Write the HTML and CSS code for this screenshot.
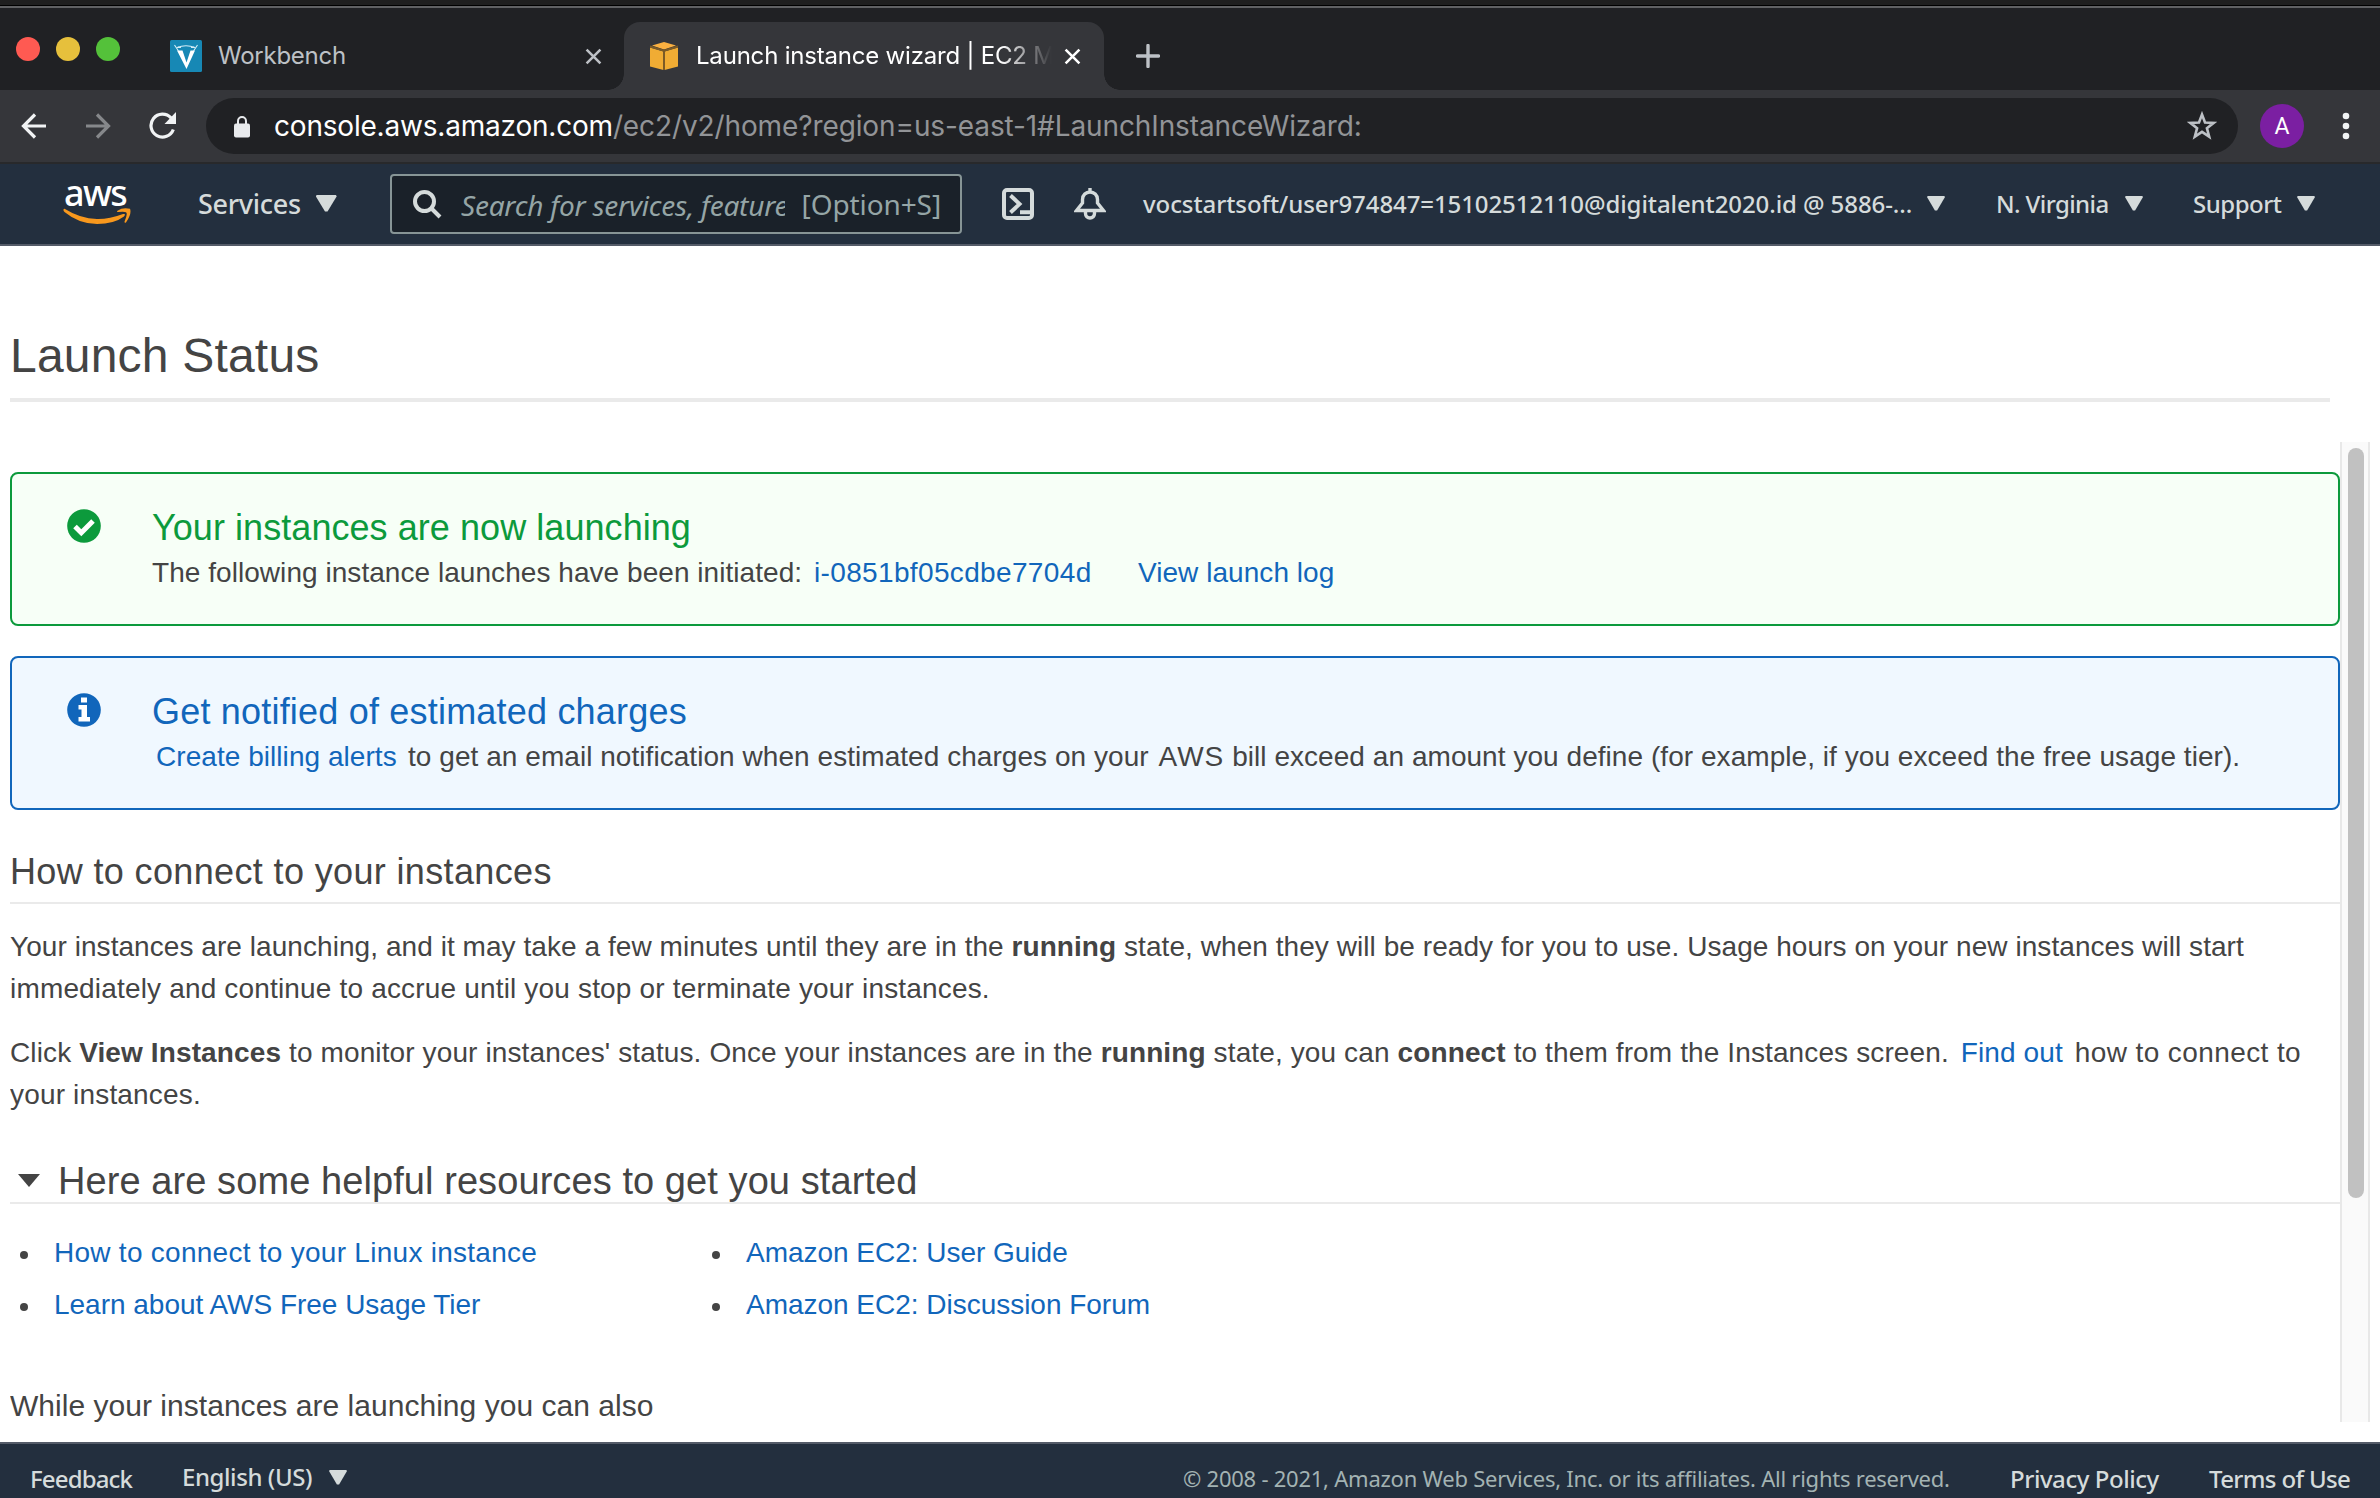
FILE: index.html
```html
<!DOCTYPE html>
<html lang="en">
<head>
<meta charset="utf-8">
<title>Launch instance wizard | EC2 Management Console</title>
<link rel="stylesheet" href="styles.css">
</head>
<body>
<div class="desktop-edge"></div>
<div class="tab-strip">
  <div class="lights"><i class="light red"></i><i class="light yellow"></i><i class="light green"></i></div>
  <div class="tab tab-idle">
    <svg class="fav-v" viewBox="0 0 32 32"><rect width="32" height="32" rx="1.5" fill="#1788b5"/><path d="M7 10.500h5.500l4 12 4-12h4.500l-8.500 18.500z" fill="#fff"/><path d="M4.500 5l4 6M27.500 5l-4 6M7 7.500Q16 4 25 7.500M11 7.500l-3-.8M21 7.500l3-.8" fill="none" stroke="#d5edf6" stroke-width="1.100"/></svg>
    <span class="tab-title">Workbench</span>
    <svg class="close" viewBox="0 0 16 16"><path d="M1.500 1.500l13 13M14.500 1.500l-13 13"/></svg>
  </div>
  <div class="tab tab-active">
    <svg class="fav-cube" viewBox="0 0 28 28"><path d="M0 5.500l13.500 4V28L0 24.500z" fill="#f0ac34"/><path d="M28 5.500l-13.500 4V28L28 24.500z" fill="#f0ac34"/><path d="M2 3.500L14 0l12 3.500L14 7.500z" fill="#fbb040"/><path d="M0 4.500l14 4.300 14-4.300M14 8v20" fill="none" stroke="#7b5a26" stroke-width="2"/></svg>
    <span class="tab-title">Launch instance wizard | EC2 M</span>
    <svg class="close" viewBox="0 0 16 16"><path d="M1.500 1.500l13 13M14.500 1.500l-13 13"/></svg>
  </div>
  <svg class="plus" viewBox="0 0 24 24"><path d="M12 1.500v21M1.500 12h21"/></svg>
</div>
<div class="toolbar">
  <svg class="nav back" viewBox="0 0 26 26"><path d="M25 13H3M14 1.500L2.500 13 14 24.500"/></svg>
  <svg class="nav forward" viewBox="0 0 26 26"><path d="M1 13h22M12 1.500L23.500 13 12 24.500"/></svg>
  <svg class="nav reload" viewBox="0 0 28 28"><path d="M24.300 17.500A11.500 11.500 0 1 1 22 5.800"/><path d="M27 0v12H15.500z" class="solid"/></svg>
  <div class="omnibox">
    <svg class="lock" viewBox="0 0 16 22"><rect y="7.500" width="16" height="14" rx="2" fill="#e8eaed"/><path d="M4 8V5a4 4 0 0 1 8 0v3" fill="none" stroke="#e8eaed" stroke-width="2"/></svg>
    <span class="url"><span class="host">console.aws.amazon.com</span>/ec2/v2/home?region=us-east-1#LaunchInstanceWizard:</span>
    <svg class="star" viewBox="0 0 30 30"><path d="M15 3.500l3 8 8.700.4-6.800 5.300 2.300 8.500-7.200-4.800-7.200 4.800 2.300-8.500-6.800-5.300 8.700-.4z"/></svg>
  </div>
  <div class="avatar">A</div>
  <svg class="dots" viewBox="0 0 8 34"><circle cx="4" cy="7" r="3.300"/><circle cx="4" cy="17" r="3.300"/><circle cx="4" cy="27" r="3.300"/></svg>
</div>
<header class="aws-nav">
  <div class="logo"><span class="logo-text">aws</span>
    <svg class="smile" viewBox="0 0 68 17"><path d="M1 .8Q-.3 2 1.500 4 16 16 34 16 51 16 61 8.500 63.500 5.500 60 6 46 11.300 34 11 17 10.500 2 1 1.300.5 1 .8z" fill="#f8981d"/><path d="M54.500 2.700Q60-1 67 .8 69 6 63 14.500 61 15.500 61.700 13 65 5.500 63 4.200 61 3.300 55.500 4 53 4 54.500 2.700z" fill="#f8981d"/></svg>
  </div>
  <div class="menu services"><span>Services</span><i class="caret big"></i></div>
  <div class="search">
    <svg class="glass" viewBox="0 0 29 29"><circle cx="11.500" cy="11.500" r="9.500"/><path d="M18.500 18.500l8.500 8.500"/></svg>
    <span class="placeholder">Search for services, feature</span>
    <span class="shortcut">[Option+S]</span>
  </div>
  <svg class="shell" viewBox="0 0 32 32"><rect x="2" y="2" width="28" height="28" rx="3"/><path d="M8.500 7.500l9 8.500-9 8.500M18 24.200h10"/></svg>
  <svg class="bell" viewBox="0 0 32 32"><path d="M16 0v4M2.500 22.500h27L23.500 15v-3.500C23.500 7 20 4 16 4S8.500 7 8.500 11.500V15zM11.500 23v2.500a4.500 4.500 0 0 0 9 0V23"/></svg>
  <div class="menu user"><span>vocstartsoft/user974847=15102512110@digitalent2020.id @ 5886-...</span><i class="caret"></i></div>
  <div class="menu region"><span>N. Virginia</span><i class="caret"></i></div>
  <div class="menu support"><span>Support</span><i class="caret"></i></div>
</header>
<main class="page">
  <h1>Launch Status</h1>
  <div class="scroller">
    <div class="content">
      <section class="alert success">
        <svg class="badge" viewBox="0 0 34 34"><circle cx="17" cy="17" r="16.800" fill="#0c9a3c"/><path d="M8 17.500l6.300 6.300L26 12" fill="none" stroke="#fff" stroke-width="5"/></svg>
        <div class="alert-body">
          <h2>Your instances are now launching</h2>
          <p><span class="t-init">The following instance launches have been initiated:</span><a class="t-id">i-0851bf05cdbe7704d</a><a class="t-log">View launch log</a></p>
        </div>
      </section>
      <section class="alert info">
        <svg class="badge" viewBox="0 0 34 34"><circle cx="17" cy="17" r="16.800" fill="#1166bb"/><path d="M14 4.500h6v5h-6zM11.500 12H20v12h3v4.500H11.500V24h3v-7.500h-3z" fill="#fff"/></svg>
        <div class="alert-body">
          <h2>Get notified of estimated charges</h2>
          <p><a class="t-bill">Create billing alerts</a><span class="t-mail">to get an email notification when estimated charges on your <span class="aws-word">AWS</span> bill exceed an amount you define (for example, if you exceed the free usage tier).</span></p>
        </div>
      </section>
      <h3>How to connect to your instances</h3>
      <p class="para"><span class="snug">Your instances are launching, and it may take a few minutes until they are in the <b>running</b> state, when they will be ready for you to use. Usage hours on your new instances will start</span><br>immediately and continue to accrue until you stop or terminate your instances.</p>
      <p class="para"><span class="near">Click <b>View Instances</b> to monitor your instances' status. Once your instances are in the <b>running</b> state, you can <b>connect</b> to them from the Instances screen. <a class="find">Find out</a></span> <span class="how">how to connect to</span><br>your instances.</p>
      <h3 class="resources"><svg class="twisty" viewBox="0 0 22 13"><path d="M0 0h22L11 13z" fill="#444"/></svg><span>Here are some helpful resources to get you started</span></h3>
      <div class="lists">
        <ul><li><a class="wide">How to connect to your Linux instance</a></li><li><a>Learn about AWS Free Usage Tier</a></li></ul>
        <ul><li><a>Amazon EC2: User Guide</a></li><li><a>Amazon EC2: Discussion Forum</a></li></ul>
      </div>
      <p class="also">While your instances are launching you can also</p>
    </div>
    <div class="track"><div class="thumb"></div></div>
  </div>
</main>
<footer class="foot">
  <span class="feedback">Feedback</span>
  <span class="menu lang"><span>English (US)</span><i class="caret"></i></span>
  <span class="copy">© 2008 - 2021, Amazon Web Services, Inc. or its affiliates. All rights reserved.</span>
  <span class="privacy">Privacy Policy</span>
  <span class="terms">Terms of Use</span>
</footer>
</body>
</html>
```
FILE: styles.css
```css
* { box-sizing: border-box; }
body { margin: 0; width: 2380px; height: 1498px; overflow: hidden; display: flex; flex-direction: column; background: #fff; font-family: "Liberation Sans", Arial, sans-serif; color: #444; }
svg { display: block; flex: none; }
h1, h2, h3, p, ul { margin: 0; padding: 0; font-weight: 400; }

/* Browser chrome */
.desktop-edge { flex: none; height: 8px; background: linear-gradient(#1f1f1f 5px, #000 5px 6px, #606163 6px); }
.tab-strip { flex: none; height: 82px; background: #202124; display: flex; font-family: Inter, sans-serif; font-size: 24px; }
.lights { display: flex; gap: 16px; padding: 29px 0 0 16px; width: 170px; }
.light { width: 24px; height: 24px; border-radius: 50%; }
.red { background: #ff5a52; }
.yellow { background: #e6c03c; }
.green { background: #54c13a; }
.tab { display: flex; align-items: center; height: 68px; margin-top: 14px; }
.tab-idle { width: 454px; padding-right: 22px; color: #bdc1c6; }
.tab-active { position: relative; width: 480px; padding: 0 23px 0 26px; background: #35363a; border-radius: 16px 16px 0 0; color: #fff; }
.tab-active::before, .tab-active::after { content: ""; position: absolute; bottom: 0; width: 16px; height: 16px; }
.tab-active::before { left: -16px; background: radial-gradient(circle at 0 0, transparent 15.5px, #35363a 16px); }
.tab-active::after { right: -16px; background: radial-gradient(circle at 100% 0, transparent 15.5px, #35363a 16px); }
.fav-v { width: 32px; height: 32px; }
.fav-cube { width: 28px; height: 28px; }
.tab-title { margin-left: 16px; flex: 1; white-space: nowrap; letter-spacing: -.25px; line-height: 34px; }
.tab-active .tab-title { flex: none; width: 362px; margin-left: 18px; letter-spacing: -.2px; -webkit-mask-image: linear-gradient(90deg, #000 305px, transparent 356px); mask-image: linear-gradient(90deg, #000 305px, transparent 356px); }
.close { width: 17px; height: 17px; margin-left: auto; fill: none; stroke: currentColor; stroke-width: 2.4; }
.plus { width: 24px; height: 24px; margin: 36px 0 0 32px; fill: none; stroke: #bdc1c6; stroke-width: 3.4; stroke-linecap: round; }
.toolbar { flex: none; height: 74px; background: #35363a; border-bottom: 2px solid #28292b; display: flex; align-items: center; padding-left: 21px; }
.nav { width: 26px; height: 26px; fill: none; stroke: #f1f3f4; stroke-width: 3.2; }
.forward { margin-left: 38px; stroke: #86888b; }
.reload { width: 28px; height: 28px; margin-left: 38px; }
.solid { fill: #f1f3f4; stroke: none; }
.omnibox { display: flex; align-items: center; width: 2032px; height: 56px; margin-left: 29px; padding: 0 21px 0 28px; border-radius: 28px; background: #202124; }
.lock { width: 16px; height: 22px; margin-top: 2px; }
.url { margin-left: 24px; font: 28px Inter, sans-serif; letter-spacing: -.11px; color: #929497; white-space: nowrap; }
.host { color: #fff; letter-spacing: -.2px; }
.star { width: 30px; height: 30px; margin-left: auto; fill: none; stroke: #bdc1c6; stroke-width: 2.6; }
.avatar { width: 44px; height: 44px; margin-left: 22px; border-radius: 50%; background: #7b1fa2; color: #fff; font: 23px/46px Roboto, sans-serif; text-align: center; }
.dots { width: 8px; height: 34px; margin-left: 38px; fill: #f1f3f4; }

/* AWS navigation */
.aws-nav { flex: none; height: 82px; background: #232f3e; border-bottom: 2px solid #545b68; display: flex; align-items: center; font-family: "Noto Sans", sans-serif; color: #d5dbdb; }
.logo { width: 68px; height: 43px; margin-left: 63px; }
.logo-text { display: block; height: 25px; padding-left: 1px; font-size: 36px; font-weight: 500; line-height: 19px; letter-spacing: -1.7px; color: #fff; }
.smile { width: 68px; height: 17px; }
.menu { display: flex; align-items: center; font-size: 24px; font-weight: 500; white-space: nowrap; }
.aws-nav .menu { padding-bottom: 2px; }
.caret { width: 18px; height: 15px; background: #d5dbdb; clip-path: polygon(6% 0, 94% 0, 100% 10%, 56% 100%, 44% 100%, 0 10%); }
.caret.big { width: 21px; height: 17px; }
.services { width: 192px; margin-left: 67px; letter-spacing: -.3px; gap: 15px; }
.services span { font-size: 27px; }
.search { display: flex; align-items: center; width: 572px; height: 60px; border: 2px solid #879596; border-radius: 4px; background: #1a2129; padding: 0 19px 0 21px; font-size: 28px; color: #95a5a6; white-space: nowrap; }
.glass { width: 29px; height: 29px; fill: none; stroke: #d5dbdb; stroke-width: 4; }
.placeholder { width: 325px; margin: 2px 0 0 19px; font-style: italic; letter-spacing: -.22px; overflow: hidden; }
.shortcut { margin-left: 17px; letter-spacing: -.1px; }
.shell { width: 32px; height: 32px; margin-left: 40px; fill: none; stroke: #d5dbdb; stroke-width: 4; }
.bell { width: 32px; height: 32px; margin-left: 40px; fill: none; stroke: #d5dbdb; stroke-width: 3.4; }
.user { width: 802px; margin-left: 37px; letter-spacing: -.09px; justify-content: space-between; }
.region { width: 147px; margin-left: 51px; letter-spacing: -.6px; justify-content: space-between; }
.support { width: 122px; margin-left: 50px; letter-spacing: -.5px; justify-content: space-between; }

/* Page */
.page { flex: none; height: 1196px; padding-left: 10px; }
h1 { width: 2320px; height: 156px; padding-top: 85px; border-bottom: 4px solid #eaeaea; font-size: 48px; line-height: 50px; letter-spacing: .2px; }
.scroller { display: flex; height: 980px; margin-top: 40px; overflow: hidden; }
.content { width: 2330px; padding-top: 30px; }
.alert { display: flex; height: 154px; margin-bottom: 30px; padding: 33px 0 0 55px; border: 2px solid; border-radius: 8px; }
.success { border-color: #0c9a3c; background: #f7fff7; }
.info { border-color: #1166bb; background: #f0f8ff; }
.badge { width: 34px; height: 34px; margin-top: 2px; }
.alert-body { margin-left: 51px; }
h2 { font-size: 36px; line-height: 42px; letter-spacing: .06px; }
.success h2 { color: #0c9a3c; }
.info h2 { color: #1166bb; letter-spacing: .2px; }
.alert p { display: flex; margin-top: 3px; font-size: 28px; line-height: 42px; white-space: nowrap; letter-spacing: .05px; }
a { color: #1166bb; }
.t-init { width: 662px; }
.t-id { width: 324px; letter-spacing: .35px; }
.t-bill { width: 252px; margin-left: 4px; }
.t-mail { letter-spacing: .05px; }
.aws-word { letter-spacing: 1px; margin-left: 2px; }
h3 { height: 53px; margin-top: 41px; border-bottom: 2px solid #eaeaea; font-size: 36px; line-height: 42px; letter-spacing: .36px; }
.para { margin-top: 22px; font-size: 28px; line-height: 42px; letter-spacing: .17px; white-space: nowrap; }
.snug { letter-spacing: .06px; }
.near { letter-spacing: .12px; }
.wide { letter-spacing: .27px; }
.how { letter-spacing: .4px; }
.find { margin: 0 4px; }
.resources { display: flex; height: 44px; margin-top: 44px; padding-left: 8px; font-size: 38px; letter-spacing: .08px; }
.resources span { height: 42px; }
.twisty { width: 22px; height: 13px; margin: 14px 18px 0 0; }
.lists { display: flex; margin-top: 23px; font-size: 28px; line-height: 52px; letter-spacing: -.02px; }
ul { width: 692px; list-style: none; }
li { display: flex; align-items: center; }
li::before { content: ""; width: 8px; height: 8px; margin: 3px 26px 0 10px; border-radius: 50%; background: #444; }
.also { margin-top: 54px; font-size: 30px; line-height: 42px; letter-spacing: .03px; }
.track { width: 30px; height: 980px; padding: 6px 6px 0; background: #fafafa; border: solid #e8e8e8; border-width: 0 2px; }
.thumb { width: 16px; height: 750px; border-radius: 8px; background: #c1c1c1; }

/* Footer */
.foot { flex: none; height: 56px; display: flex; border-top: 2px solid #545b68; background: #232f3e; padding: 17px 0 0 30px; font: 500 24px/36px "Noto Sans", sans-serif; color: #d5dbdb; white-space: nowrap; }
.feedback { width: 152px; letter-spacing: -.85px; }
.lang { width: 165px; height: 32px; justify-content: space-between; letter-spacing: -.42px; }
.copy { width: 827px; margin-left: 836px; font-size: 22px; font-weight: 400; line-height: 34px; letter-spacing: -.24px; color: #a3b3b3; }
.privacy { width: 199px; letter-spacing: -.45px; }
.terms { letter-spacing: -.66px; }
```
